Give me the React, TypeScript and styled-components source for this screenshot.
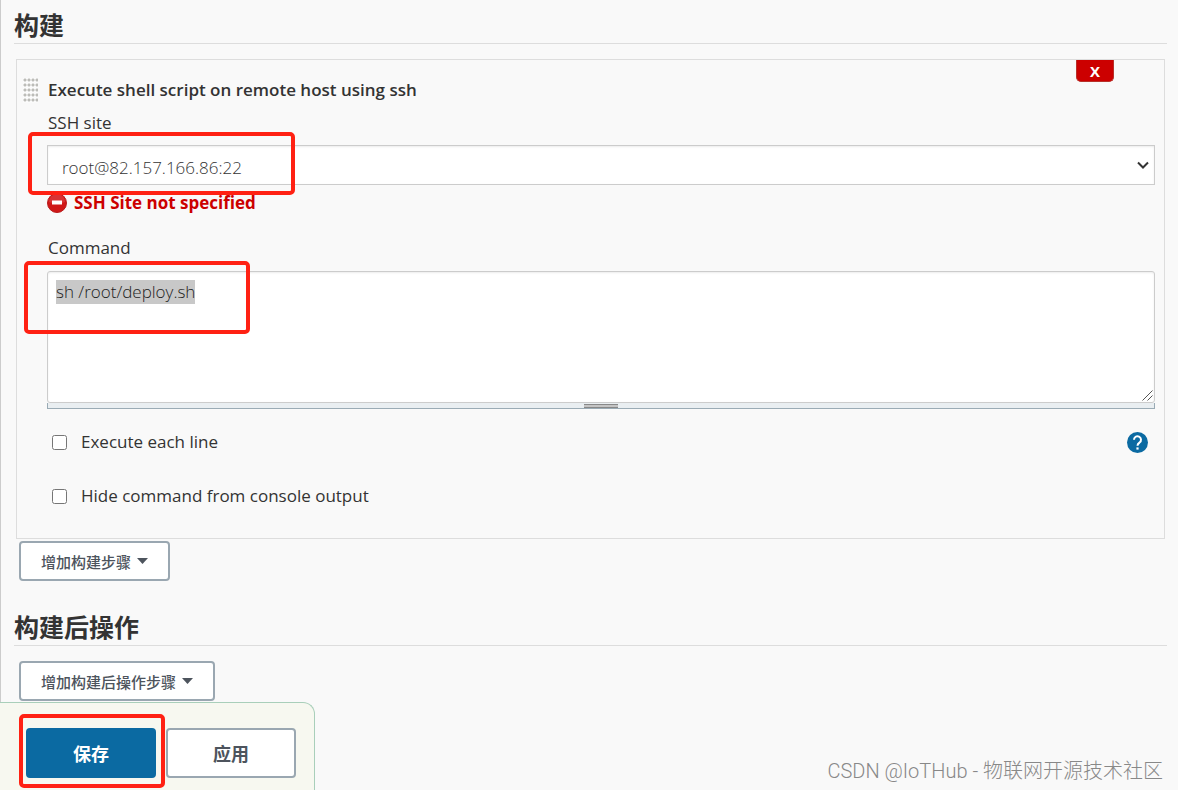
import React, { useEffect, useRef } from "react";
import styled, { createGlobalStyle } from "styled-components";

const GlobalStyle = createGlobalStyle`
  *, *::before, *::after { box-sizing: border-box; }
  html, body { margin: 0; background: #f9f9f9; }
  body, button, select, textarea {
    font-family: "Open Sans", "Noto Sans CJK SC", sans-serif;
    color: #333;
  }
`;

const Page = styled.div`
  position: relative;
  display: flex;
  flex-direction: column;
  min-height: 100vh;
`;

const Main = styled.main`
  flex: 1;
  border-left: 1px solid #ccc;
  padding: 0 11px 1px 13px;
`;

const Section = styled.section`
  & + & { margin-top: 28px; }
`;

const SectionTitle = styled.h2`
  margin: 0 0 15px;
  height: ${(p: { $first?: boolean }) => (p.$first ? 44 : 37)}px;
  padding-top: ${(p: { $first?: boolean }) => (p.$first ? 8 : 1)}px;
  border-bottom: 1px solid #ddd;
  font-size: 25px;
  line-height: 34px;
  font-weight: 700;
`;

const StepCard = styled.div`
  position: relative;
  margin: 0 2px 2px;
  border: 1px solid #ddd;
  padding: 18px 9px 30px 6px;
  display: grid;
  grid-template-columns: 14px minmax(0, 1fr);
  column-gap: 10px;
`;

const DragHandle = styled.div`
  width: 15px;
  height: 25px;
  background: radial-gradient(circle at 2px 2px, #bcbcb8 1px, #fbfbfb 2px) 0 0 / 4px 5px;
`;

const DeleteButton = styled.button`
  position: absolute;
  top: 0;
  right: 50px;
  width: 38px;
  height: 22px;
  padding: 0;
  border: 1px solid #b8312a;
  border-top: 0;
  border-radius: 0 0 5px 5px;
  background: #c00;
  color: #fff;
  font-size: 15px;
  line-height: 20px;
  font-weight: 700;
`;

const StepBody = styled.div`
  display: flex;
  flex-direction: column;
`;

const StepTitle = styled.h3`
  margin: 0 0 9px 1px;
  font-size: 17px;
  line-height: 24px;
  font-weight: 600;
`;

const Field = styled.div`
  position: relative;
`;

const FieldLabel = styled.label<{ $gap: number }>`
  display: block;
  margin-left: 1px;
  padding-bottom: ${(p) => p.$gap}px;
  font-size: 17px;
  line-height: 24px;
  font-weight: 500;
`;

const SelectWrap = styled.div`
  position: relative;
`;

const Select = styled.select`
  display: block;
  width: 100%;
  height: 40px;
  padding: 4px 32px 0 14px;
  border: 1px solid #ccc;
  border-radius: 0;
  background: #fff;
  box-shadow: inset 0 1px 2px rgba(0, 0, 0, 0.08);
  appearance: none;
  font-size: 17px;
  font-weight: 300;
`;

const Chevron = styled.svg`
  position: absolute;
  right: 6px;
  top: 16px;
  pointer-events: none;
`;

const ErrorLine = styled.p`
  display: flex;
  align-items: center;
  gap: 7px;
  margin: 6px 0 21px;
  color: #c00;
  font-size: 17px;
  line-height: 24px;
  font-weight: 700;
`;

const TextAreaWrap = styled.div`
  position: relative;
`;

const TextArea = styled.textarea`
  display: block;
  width: 100%;
  height: 132px;
  padding: 8px;
  border: 1px solid #ccc;
  border-radius: 3px;
  background: #fff;
  box-shadow: inset 0 1px 2px rgba(0, 0, 0, 0.08);
  outline: none;
  resize: vertical;
  font-size: 17px;
  line-height: 24px;
  font-weight: 300;
  &::selection { background: #c8c8c8; color: #222; }
  &::-webkit-resizer { background: transparent; }
`;

const Grip = styled.svg`
  position: absolute;
  right: 2px;
  bottom: 2px;
  pointer-events: none;
`;

const ResizeBar = styled.div`
  display: flex;
  justify-content: center;
  height: 6px;
  border: 1px solid #9aabb5;
  border-top: 0;
  background: #e9eef1;
  &::after {
    content: "";
    width: 34px;
    height: 4px;
    margin-top: 1px;
    border: solid #888;
    border-width: 1px 0;
    background: #c4c4c4;
  }
`;

const CheckRow = styled.div`
  display: flex;
  align-items: center;
  height: 24px;
  margin-top: ${(p: { $gap: number }) => p.$gap}px;
  padding: 0 7px 0 5px;
`;

const CheckLabel = styled.label`
  display: flex;
  align-items: center;
  gap: 14px;
  margin-right: auto;
  font-size: 17px;
  line-height: 24px;
  font-weight: 500;
  input { width: 15px; height: 15px; margin: 0; }
`;

const HelpLink = styled.a`
  display: flex;
`;

const MenuButton = styled.button`
  display: flex;
  align-items: center;
  gap: 6px;
  height: 40px;
  margin-left: 5px;
  padding: 0 20px;
  border: 2px solid #9aa7b1;
  border-radius: 4px;
  background: #fff;
  color: #4d545d;
  font-size: 15px;
  font-weight: 500;
`;

const ActionBar = styled.footer`
  display: flex;
  gap: 10px;
  align-self: flex-start;
  height: 88px;
  padding: 25px 18px 0 26px;
  border: 1px solid #a9cfba;
  border-width: 1px 1px 0 0;
  border-radius: 0 12px 0 0;
  background: #f7f8f0;
`;

const Action = styled.div`
  position: relative;
`;

const ActionButton = styled.button<{ $primary?: boolean }>`
  width: 130px;
  height: 50px;
  padding: 0;
  border: 2px solid ${(p) => (p.$primary ? "#0b6aa2" : "#9aa7b1")};
  border-radius: 4px;
  background: ${(p) => (p.$primary ? "#0b6aa2" : "#fff")};
  color: ${(p) => (p.$primary ? "#fff" : "#4d545d")};
  font-size: 18px;
  font-weight: 700;
`;

const Marker = styled.span<{ $top: number; $left: number; $width: number; $height: number }>`
  position: absolute;
  top: ${(p) => p.$top}px;
  left: ${(p) => p.$left}px;
  width: ${(p) => p.$width}px;
  height: ${(p) => p.$height}px;
  border: 4px solid #ff2113;
  border-radius: 5px;
  pointer-events: none;
  z-index: 1;
`;

const Watermark = styled.span`
  position: absolute;
  right: 15px;
  bottom: 4px;
  color: #888;
  font-family: Roboto, "Noto Sans CJK SC", sans-serif;
  font-size: 20px;
  line-height: 30px;
  font-weight: 300;
`;

const Caret = () => (
  <svg width="11" height="6" viewBox="0 0 11 6" aria-hidden="true">
    <path d="M0 0h11L5.5 6z" fill="#4d545d" />
  </svg>
);

const ErrorIcon = () => (
  <svg width="20" height="20" viewBox="0 0 20 20" aria-hidden="true">
    <circle cx="10" cy="10" r="9.5" fill="#d01818" stroke="#b81c1c" />
    <path d="M2 9a8 8 0 0 1 16 0q-8 3-16 0" fill="#de4848" opacity=".6" />
    <rect x="5" y="7.5" width="10" height="4" fill="#fff" />
  </svg>
);

const HelpIcon = () => (
  <svg width="21" height="21" viewBox="0 0 21 21" aria-hidden="true">
    <circle cx="10.5" cy="10.5" r="10.5" fill="#0b6aa2" />
    <path d="M7 7.8a3.5 3.5 0 1 1 5.6 2.7c-1.2.9-2.1 1.5-2.1 3.2" fill="none" stroke="#fff" strokeWidth="2" />
    <rect x="9.4" y="15.4" width="2.2" height="2.2" fill="#fff" />
  </svg>
);

export default function App() {
  const command = useRef<HTMLTextAreaElement>(null);

  useEffect(() => {
    command.current?.focus();
    command.current?.select();
  }, []);

  return (
    <>
      <GlobalStyle />
      <Page>
        <Main>
          <Section>
            <SectionTitle $first>构建</SectionTitle>
            <StepCard>
              <DragHandle />
              <DeleteButton type="button">X</DeleteButton>
              <StepBody>
                <StepTitle>Execute shell script on remote host using ssh</StepTitle>
                <FieldLabel htmlFor="site" $gap={10}>SSH site</FieldLabel>
                <SelectWrap>
                  <Select id="site">
                    <option>root@82.157.166.86:22</option>
                  </Select>
                  <Chevron width="12" height="9" viewBox="0 0 12 9" aria-hidden="true">
                    <path d="M1 1.5l5 5 5-5" fill="none" stroke="#333" strokeWidth="2" />
                  </Chevron>
                  <Marker $top={-13} $left={-19} $width={267} $height={63} />
                </SelectWrap>
                <ErrorLine>
                  <ErrorIcon />
                  SSH Site not specified
                </ErrorLine>
                <Field>
                  <FieldLabel htmlFor="command" $gap={11}>Command</FieldLabel>
                  <TextAreaWrap>
                    <TextArea id="command" ref={command} defaultValue="sh /root/deploy.sh" spellCheck={false} />
                    <Grip width="11" height="11" viewBox="0 0 11 11" aria-hidden="true">
                      <path d="M0.5 10.5l10-10M5.5 10.5l5-5" stroke="#555" fill="none" />
                    </Grip>
                  </TextAreaWrap>
                  <ResizeBar />
                  <Marker $top={25} $left={-23} $width={226} $height={73} />
                </Field>
                <CheckRow $gap={21}>
                  <CheckLabel>
                    <input type="checkbox" />
                    Execute each line
                  </CheckLabel>
                  <HelpLink href="#help" aria-label="Help">
                    <HelpIcon />
                  </HelpLink>
                </CheckRow>
                <CheckRow $gap={30}>
                  <CheckLabel>
                    <input type="checkbox" />
                    Hide command from console output
                  </CheckLabel>
                </CheckRow>
              </StepBody>
            </StepCard>
            <MenuButton type="button">
              增加构建步骤
              <Caret />
            </MenuButton>
          </Section>
          <Section>
            <SectionTitle>构建后操作</SectionTitle>
            <MenuButton type="button">
              增加构建后操作步骤
              <Caret />
            </MenuButton>
          </Section>
        </Main>
        <ActionBar>
          <Action>
            <ActionButton type="button" $primary>保存</ActionButton>
            <Marker $top={-14} $left={-7} $width={146} $height={74} />
          </Action>
          <Action>
            <ActionButton type="button">应用</ActionButton>
          </Action>
        </ActionBar>
        <Watermark>CSDN @IoTHub - 物联网开源技术社区</Watermark>
      </Page>
    </>
  );
}
